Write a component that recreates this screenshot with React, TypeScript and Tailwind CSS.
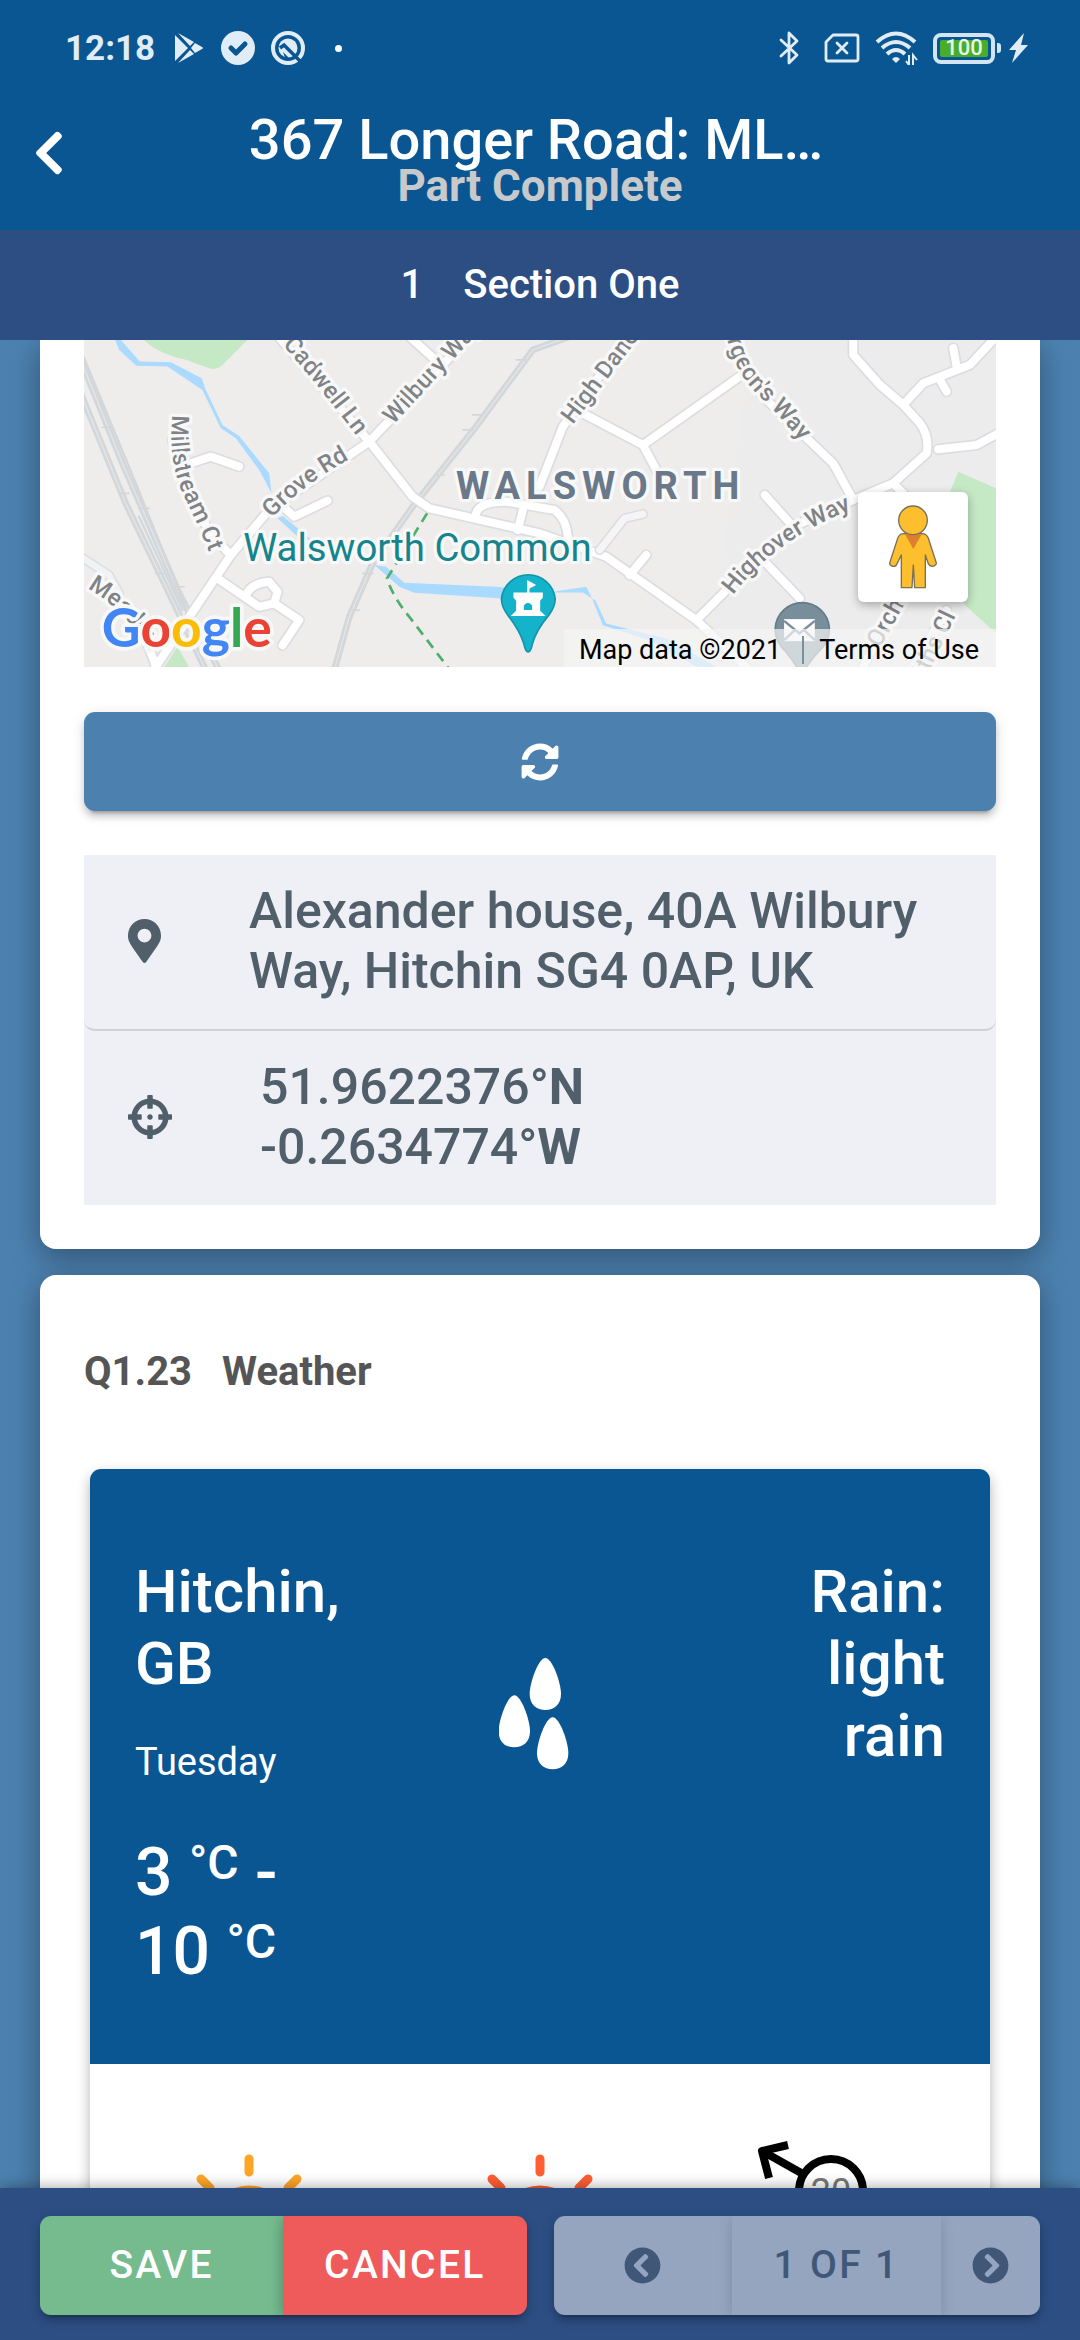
import React from 'react';
import {
  FaChevronCircleLeft,
  FaChevronCircleRight,
  FaChevronLeft,
  FaCrosshairs,
  FaMapMarkerAlt,
  FaSyncAlt,
} from 'react-icons/fa';

function StatusBar() {
  return (
    <div className="flex h-24 items-center justify-between pl-[65px] pr-[52px] text-[#e1edf6]">
      <div className="flex items-center">
        <span className="text-[35px] font-bold leading-none">12:18</span>
        <svg className="ml-5 h-[30px] w-7" viewBox="0 0 28 30" fill="currentColor">
          <path d="M0 2v26l13-13zM3 0l12 13 4-4zM3 30l12-13 4 4zM20 10l-4 5 4 5 7-4q2-1 0-2z" />
        </svg>
        <svg className="ml-[18px] h-[34px] w-[34px]" viewBox="0 0 34 34">
          <circle cx="17" cy="17" r="17" fill="currentColor" />
          <path d="M10 17l5 5 9-9" fill="none" stroke="#0a5693" strokeWidth="5" strokeLinecap="round" strokeLinejoin="round" />
        </svg>
        <svg className="ml-4 h-[34px] w-[34px]" viewBox="0 0 34 34" fill="none">
          <circle cx="17" cy="17" r="15" stroke="currentColor" strokeWidth="4" />
          <circle cx="17" cy="17" r="9.500" fill="currentColor" />
          <path d="M9 17l4-3 18 18" stroke="#0a5693" strokeWidth="3.500" />
          <path d="M12 21l6 6h-4z" fill="#0a5693" />
        </svg>
        <span className="ml-[30px] h-[7px] w-[7px] rounded-full bg-white" />
      </div>
      <div className="flex items-center">
        <svg className="h-[34px] w-5" viewBox="0 0 20 34" fill="none" stroke="currentColor" strokeWidth="2.800" strokeLinejoin="round" strokeLinecap="round">
          <path d="M2 9l16 15-8 8V2l8 8L2 25" />
        </svg>
        <svg className="ml-[25px] h-[30px] w-9" viewBox="0 0 36 30" fill="none" stroke="currentColor" strokeWidth="2.800" strokeLinejoin="round">
          <path d="M9 2h23q2 0 2 2v22q0 2-2 2H4q-2 0-2-2V9z" />
          <path d="M13 10l10 10M23 10L13 20" strokeLinecap="round" />
        </svg>
        <svg className="ml-[15px] h-[34px] w-[43px]" viewBox="0 0 43 34" fill="none" stroke="currentColor" strokeWidth="4">
          <path d="M2 11q19-17 38 0M7 17q14-12 28 0M12 23q9-8 18 0" />
          <path d="M17 28q4-4 8 0l-4 4z" fill="currentColor" stroke="none" />
          <path d="M34 24v10l-3-4M38 34V24l4 5" strokeWidth="2" />
        </svg>
        <div className="ml-[15px] flex items-center">
          <div className="flex h-[31px] w-[62px] items-center rounded-[8px] border-[4px] border-[#d3e4f2] p-[3px]">
            <div className="flex h-full w-full items-center justify-center rounded-[2px] bg-[#48ad2b] text-[22px] font-medium leading-none text-[#e9f7e4]">
              100
            </div>
          </div>
          <span className="ml-[2px] h-[10px] w-1 rounded-r-[3px] bg-[#d3e4f2]" />
        </div>
        <svg className="ml-2 h-[30px] w-[19px]" viewBox="0 0 19 30" fill="currentColor">
          <path d="M15 0L0 17h7L3 30 19 12h-7z" />
        </svg>
      </div>
    </div>
  );
}

const roads = [
  // west of the main line
  'M600 410L515 380 440 405 400 330 440 480 520 620 575 675',
  'M330 1040L575 675 690 540 990 335 1310 0',
  'M700 0L990 335 1120 500 1170 535 1500 610 1700 680 1970 870 2140 1030',
  'M1110 20L1210 110',
  'M720 520L765 560 865 512',
  'M535 745L660 830 705 820 780 870 730 945',
  'M620 800Q630 760 690 755L715 785 705 820',
  'M310 900L355 1020',
  // around Walsworth
  'M1310 550Q1320 515 1400 515L1545 540Q1580 565 1585 620',
  'M1450 540L1435 600',
  'M1500 470L1570 290 1780 0',
  'M1610 240L1810 345 2100 140',
  'M1810 345L1850 420',
  'M2080 20Q2100 120 2170 200L2380 400 2440 510',
  'M1970 870L2070 770 2260 590 2440 510 2560 460 2660 370Q2670 320 2640 280L2590 225 2520 165 2440 75V20',
  'M2590 225L2650 160 2790 105 2860 30',
  'M2740 55L2750 110M2700 150L2720 185',
  'M2695 358L2810 345 2875 310',
  'M2560 460L2600 500',
  'M2175 495L2260 590M2180 700L2280 805',
  'M1770 735L1820 675',
  'M2470 1010L2580 800M2620 1010L2720 840',
];

const rails = [
  'M125 90L250 400 420 790 540 1020',
  'M125 190L260 520 400 810 500 1020',
  'M2010 -130L1480 60 1310 290 1120 530 1000 700 930 860 885 1020',
];

const streetLabels = [
  { id: 'cadwell', d: 'M730 45Q850 180 990 370', text: 'Cadwell Ln' },
  { id: 'wilbury', d: 'M1062 285L1360 -40', text: 'Wilbury Way' },
  { id: 'millstream', d: 'M400 255Q385 400 440 510T530 720', text: 'Millstream Ct' },
  { id: 'grove', d: 'M700 565Q780 465 990 355', text: 'Grove Rd' },
  { id: 'dane', d: 'M1600 285L1860 -60', text: 'High Dane' },
  { id: 'sturgeon', d: 'M2055 -10Q2075 120 2160 200T2400 480', text: "urgeon's Way" },
  { id: 'highover', d: 'M2080 795Q2210 620 2470 525', text: 'Highover Way' },
  { id: 'mead', d: 'M145 775Q260 840 330 960', text: 'Meadow' },
  { id: 'orchard', d: 'M2520 955L2640 740', text: 'Orchard' },
  { id: 'griffiths', d: 'M2640 1080L2770 810', text: 'ffiths Cl' },
];

function LocationMap() {
  return (
    <div className="relative h-[327px] overflow-hidden bg-[#eeedec]">
      <svg
        className="block h-full w-full"
        viewBox="135 30 2733 981"
        preserveAspectRatio="xMidYMid slice"
        fontFamily="Roboto, sans-serif"
        role="img"
        aria-label="Map of Walsworth"
      >
        <rect x="135" y="0" width="2750" height="1020" fill="#eeedec" />
        <path d="M2140 0h740v1020H2000z" fill="#ececec" />
        <g fill="#c5e8c5">
          <path d="M310 25Q350 70 440 90L510 115Q535 125 560 95L630 25z" />
          <path d="M2755 425L2880 480V920L2770 820 2700 560z" />
          <path d="M370 1020L415 950 455 1020z" />
        </g>
        <g fill="#aadaff">
          <path d="M228 28L240 60 292 108 385 110 490 180 545 295 590 325 660 420 697 490 690 430 600 318 550 285 500 180 488 145 395 97 302 95 245 30z" />
          <path d="M715 565L770 615 830 640 770 590 730 558z" />
          <path d="M1005 705L1080 770 1125 788 1400 806 1640 770 1655 800 1690 885 1830 930 1980 1015H2040L1880 925 1700 880 1668 812 1630 787 1520 787 1370 770 1095 758 1040 710z" />
        </g>
        <g fill="none" strokeLinejoin="round" strokeLinecap="round">
          {rails.map((d) => (
            <path key={d} d={d} stroke="#d3d7da" strokeWidth="20" />
          ))}
          {rails.map((d) => (
            <path key={d} d={d} stroke="#e3e5e6" strokeWidth="4" />
          ))}
          <path d="M125 60L290 460 450 860M300 560L430 840" stroke="#d3d7da" strokeWidth="7" />
          <path d="M1430 90h30M1300 255h30M1270 300h30M1185 435h30M970 730h30M930 840h30M190 292h30M240 490h30M300 535h30M405 770h30M350 730h30" stroke="#d3d7da" strokeWidth="5" />
          <path d="M125 680L210 735 240 790" stroke="#dcdfe3" strokeWidth="30" />
          <path d="M125 680L210 735 240 790" stroke="#f1f2f3" strokeWidth="20" />
          {roads.map((d) => (
            <path key={d} d={d} stroke="#dcdde3" strokeWidth="34" />
          ))}
          {roads.map((d) => (
            <path key={d} d={d} stroke="#ffffff" strokeWidth="24" />
          ))}
          <path d="M1680 660L1755 565 1810 552" stroke="#dcdde3" strokeWidth="30" />
          <path d="M1680 660L1755 565 1810 552" stroke="#f5f5f5" strokeWidth="21" />
          <path d="M1163 550L1043 745Q1060 800 1110 860L1228 1015" stroke="#4eae6a" strokeWidth="8" strokeDasharray="30 20" strokeLinecap="butt" />
        </g>
        <g fill="#808386" stroke="#f8f8f8" strokeWidth="20" strokeLinejoin="round" paintOrder="stroke" fontSize="72" fontWeight="500">
          {streetLabels.map((label) => (
            <g key={label.id}>
              <path id={label.id} d={label.d} fill="none" stroke="none" />
              <text>
                <textPath href={`#${label.id}`}>{label.text}</textPath>
              </text>
            </g>
          ))}
        </g>
        <g stroke="#f8f8f8" strokeWidth="20" strokeLinejoin="round" paintOrder="stroke">
          <text x="1250" y="507" fill="#69798a" fontSize="114" fontWeight="700" letterSpacing="18">
            WALSWORTH
          </text>
          <text x="612" y="692" fill="#15848c" fontSize="115">
            Walsworth Common
          </text>
        </g>
        {/* park pin */}
        <path d="M1466 965Q1458 965 1453 940 1440 900 1405 855 1386 830 1386 806A81 81 0 0 1 1547 806Q1547 830 1528 855 1490 900 1479 940 1474 965 1466 965z" fill="#15b3cb" stroke="#1394a8" strokeWidth="5" />
        <path d="M1463 750l27 15-20 10v12h40v15l-8 10v30l16 16h-104l16-16v-30l-8-10v-15h41z" fill="#fff" />
        <path d="M1453 840v-14q12-16 25 0v14z" fill="#15b3cb" />
        {/* post office pin */}
        <path d="M2286 1040Q2270 1000 2225 950A81 81 0 1 1 2350 950Q2300 1000 2286 1040z" fill="#788f9b" stroke="#647c89" strokeWidth="5" />
        <rect x="2233" y="867" width="92" height="66" fill="#fff" />
        <path d="M2233 872l46 38 46-38M2233 930l32-30M2325 930l-32-30" fill="none" stroke="#788f9b" strokeWidth="7" />
        <text x="188" y="950" fontFamily="Lato, sans-serif" fontSize="160" fontWeight="700" stroke="#f8f8f8" strokeWidth="22" strokeLinejoin="round" paintOrder="stroke">
          <tspan fill="#4285f4">G</tspan>
          <tspan fill="#ea4335">o</tspan>
          <tspan fill="#fbbc05">o</tspan>
          <tspan fill="#4285f4">g</tspan>
          <tspan fill="#34a853">l</tspan>
          <tspan fill="#ea4335">e</tspan>
        </text>
      </svg>

      <button
        aria-label="Street View"
        className="absolute bottom-[65px] right-7 flex h-[110px] w-[110px] items-center justify-center rounded-[6px] bg-white shadow-[0_3px_10px_rgba(0,0,0,0.3)]"
      >
        <svg className="h-[84px] w-[48px]" viewBox="0 0 144 252" stroke="#77705d" strokeWidth="4" strokeLinejoin="round">
          <path d="M42 86H102Q114 88 118 100L142 174Q142 182 130 184 122 184 118 176L109 150V248H77L73 180 69 248H37V150L24 176Q20 186 12 184 2 182 2 174L26 100Q30 88 42 86z" fill="#fdbf2d" />
          <path d="M48 88H98L73 132z" fill="#df7f2e" stroke="none" />
          <circle cx="72" cy="46" r="43" fill="#fdbf2d" />
        </svg>
      </button>

      <div className="absolute bottom-0 right-0 flex h-[38px] items-center bg-[#f5f5f5]/70 pl-[15px] pr-[17px] pt-1 text-[27px] leading-none text-black">
        <span>Map data ©2021</span>
        <span className="ml-[21px] mr-[15px] h-7 w-[2px] bg-[#78909c]" />
        <a href="#terms">Terms of Use</a>
      </div>
    </div>
  );
}

function SunIcon({ className }: { className: string }) {
  return (
    <svg className={`h-40 w-40 ${className}`} viewBox="0 0 160 160" fill="none" stroke="currentColor" strokeWidth="9" strokeLinecap="round">
      <circle cx="80" cy="87" r="37" />
      <path d="M80 19v13M32 39l9 9M128 39l-9 9M12 87h13M148 87h-13" />
    </svg>
  );
}

function WindIcon() {
  return (
    <svg className="h-40 w-40" viewBox="0 0 160 160" fill="none" stroke="#000" fontFamily="Roboto, sans-serif">
      <circle cx="80" cy="51" r="32" strokeWidth="8" />
      <path d="M52 34L11 11" strokeWidth="8" />
      <path d="M18 38L11 11 37 5" strokeWidth="8" strokeLinejoin="round" />
      <text x="80" y="64" fill="#777" stroke="none" fontSize="36" textAnchor="middle">
        20
      </text>
    </svg>
  );
}

function WeatherCard() {
  return (
    <div className="mx-[6px] mt-[73px] overflow-hidden rounded-t-[11px] bg-white shadow-[0_6px_14px_rgba(0,0,0,0.3)]">
      <div className="grid grid-cols-3 bg-[#0a5693] px-[45px] pb-[73px] pt-[87px] text-white">
        <div>
          <h3 className="text-[60px] font-medium leading-[72px]">
            Hitchin,
            <br />
            GB
          </h3>
          <p className="mt-[38px] text-[38px] leading-[48px]">Tuesday</p>
          <p className="mt-[47px] text-[66px] font-medium leading-[79px]">
            3 <sup className="-top-4 text-[48px] leading-none">°C</sup> -
            <br />
            10 <sup className="-top-4 text-[48px] leading-none">°C</sup>
          </p>
        </div>
        <div className="flex justify-center pr-3 pt-[102px]">
          <svg className="h-28 w-[70px]" viewBox="0 0 210 336" fill="#fff">
            <path id="drop" d="M139 0C160 0 186 75 186 108 186 140 165 156 139 156 113 156 92 140 92 108 92 75 118 0 139 0z" />
            <use href="#drop" x="-93" y="112" />
            <use href="#drop" x="22" y="178" />
          </svg>
        </div>
        <p className="text-right text-[60px] font-medium leading-[72px]">
          Rain:
          <br />
          light
          <br />
          rain
        </p>
      </div>
      <div className="grid grid-cols-3 justify-items-center px-[14px] pt-[76px]">
        <SunIcon className="text-[#ffa526]" />
        <SunIcon className="text-[#ff5f33]" />
        <WindIcon />
      </div>
    </div>
  );
}

const buttonShadow =
  'shadow-[0_8px_3px_-6px_rgba(0,0,0,0.2),0_6px_6px_rgba(0,0,0,0.14),0_3px_14px_rgba(0,0,0,0.12)]';
const cardShadow = 'shadow-[0_8px_30px_rgba(0,0,0,0.35)]';

export default function App() {
  return (
    <div className="flex h-screen flex-col overflow-hidden bg-[#4c81af] font-[Roboto,sans-serif]">
      <header className="shrink-0 bg-[#0a5693] text-white">
        <StatusBar />
        <div className="flex items-start pb-[22px] pt-5">
          <button aria-label="Back" className="flex h-[74px] w-[100px] items-center pl-[33px]">
            <FaChevronLeft className="h-[50px] w-8" />
          </button>
          <div className="min-w-0 flex-1 text-center">
            <h1 className="truncate pr-2 text-[56px] font-medium leading-[48px] [overflow:visible]">367 Longer Road: ML…</h1>
            <p className="text-[44px] font-bold leading-[44px] text-[#c8c9ca]">Part Complete</p>
          </div>
          <div className="w-[100px]" />
        </div>
      </header>

      <div className="z-10 flex h-[110px] shrink-0 items-center justify-center gap-10 bg-[#2c4e83] text-[40px] font-medium text-white">
        <span>1</span>
        <h2>Section One</h2>
      </div>

      <main className="min-h-0 flex-1 overflow-hidden px-10">
        <section className={`rounded-b-[16px] bg-white px-11 pb-11 ${cardShadow}`}>
          <LocationMap />
          <button
            aria-label="Refresh location"
            className={`mt-[45px] flex h-[99px] w-full items-center justify-center rounded-[11px] bg-[#4c81af] text-white ${buttonShadow}`}
          >
            <FaSyncAlt className="h-[38px] w-[38px]" />
          </button>
          <ul className="mt-11 bg-[#eff0f5] text-[50px] font-medium leading-[60px] text-[#515f6b]">
            <li className="flex items-center rounded-b-[11px] border-b-2 border-[#cfd1d6] px-11 pb-7 pt-[26px]">
              <FaMapMarkerAlt className="mr-[88px] h-11 w-[33px] shrink-0" />
              <span>Alexander house, 40A Wilbury Way, Hitchin SG4 0AP, UK</span>
            </li>
            <li className="flex items-center px-11 pb-7 pt-[26px]">
              <FaCrosshairs className="mr-[88px] h-11 w-11 shrink-0" />
              <span>
                51.9622376°<b>N</b>
                <br />
                -0.2634774°<b>W</b>
              </span>
            </li>
          </ul>
        </section>

        <section className={`mt-[26px] rounded-t-[16px] bg-white px-11 pt-[73px] ${cardShadow}`}>
          <h2 className="flex gap-[30px] text-[40px] font-bold leading-[48px] text-[#555]">
            <span>Q1.23</span>
            <span>Weather</span>
          </h2>
          <WeatherCard />
        </section>
      </main>

      <footer className="z-10 flex shrink-0 gap-[27px] bg-[#2c4e83] px-10 pb-[25px] pt-7 text-[39px] font-medium tracking-[0.06em] shadow-[0_-2px_12px_rgba(0,0,0,0.3)]">
        <div className={`flex h-[99px] flex-1 overflow-hidden rounded-[11px] text-white ${buttonShadow}`}>
          <button className="flex-1 bg-[#76bb8e]">SAVE</button>
          <button className="z-10 flex-1 bg-[#ef5b5b] shadow-[0_3px_14px_rgba(0,0,0,0.3)]">CANCEL</button>
        </div>
        <div className={`flex h-[99px] flex-1 overflow-hidden rounded-[11px] bg-[#95a5c0] text-[#405778] ${buttonShadow}`}>
          <button aria-label="Previous page" className="flex flex-1 items-center justify-center">
            <FaChevronCircleLeft className="h-[37px] w-[37px]" />
          </button>
          <button className="w-[209px] shadow-[0_3px_14px_rgba(0,0,0,0.15)]">1 OF 1</button>
          <button aria-label="Next page" className="flex w-[99px] items-center justify-center">
            <FaChevronCircleRight className="h-[37px] w-[37px]" />
          </button>
        </div>
      </footer>
    </div>
  );
}
